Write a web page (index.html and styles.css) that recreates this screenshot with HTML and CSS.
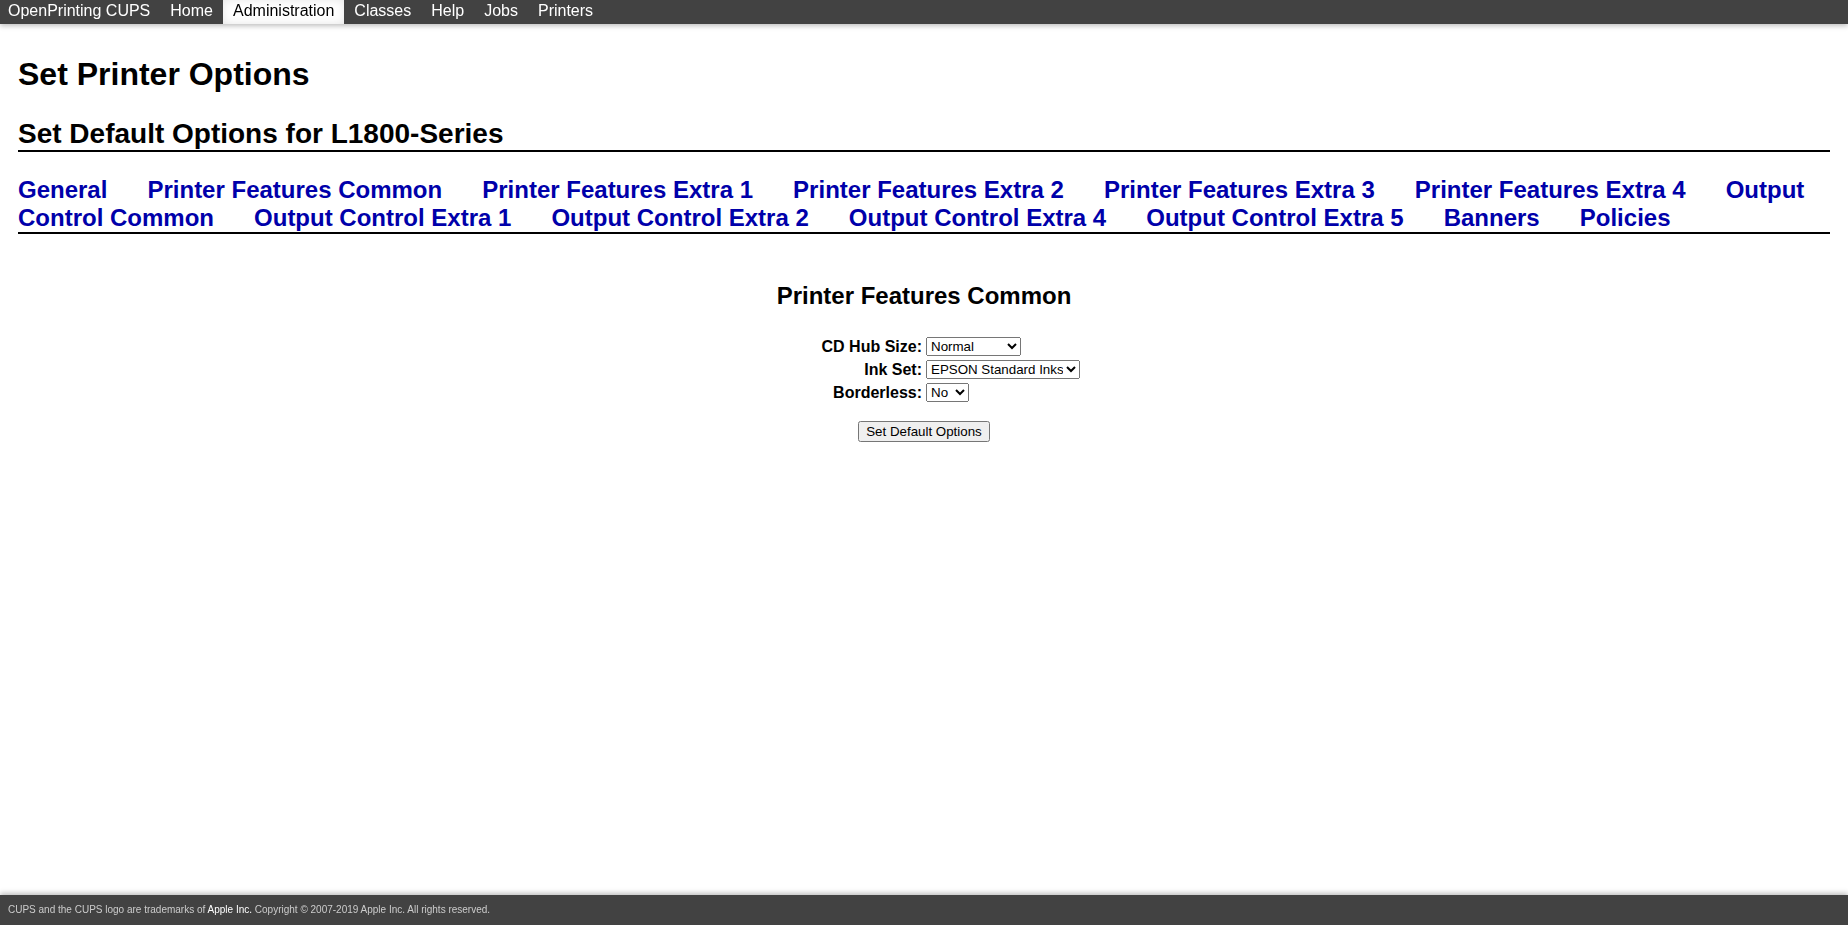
FILE: index.html
```html
<!DOCTYPE html>
<html>
<head>
<meta charset="utf-8">
<title>Set Printer Options - CUPS</title>
<link rel="stylesheet" href="styles.css">
</head>
<body>
<div class="header">
  <ul>
    <li><a class="first" href="#">OpenPrinting CUPS</a></li>
    <li><a href="#">Home</a></li>
    <li><a class="active" href="#">Administration</a></li>
    <li><a href="#">Classes</a></li>
    <li><a href="#">Help</a></li>
    <li><a href="#">Jobs</a></li>
    <li><a href="#">Printers</a></li>
  </ul>
</div>
<div class="body">
  <h1>Set Printer Options</h1>
  <h2 class="title">Set Default Options for L1800-Series</h2>
  <div class="tabs"><a href="#">General</a> <a href="#">Printer Features Common</a> <a href="#">Printer Features Extra 1</a> <a href="#">Printer Features Extra 2</a> <a href="#">Printer Features Extra 3</a> <a href="#">Printer Features Extra 4</a> <a href="#">Output Control Common</a> <a href="#">Output Control Extra 1</a> <a href="#">Output Control Extra 2</a> <a href="#">Output Control Extra 4</a> <a href="#">Output Control Extra 5</a> <a href="#">Banners</a> <a href="#">Policies</a></div>
  <form class="options">
    <h3 class="group">Printer Features Common</h3>
    <table class="opts">
      <tr>
        <th>CD Hub Size:</th>
        <td><select class="sel-hub"><option>Normal</option><option>Small</option></select></td>
      </tr>
      <tr>
        <th>Ink Set:</th>
        <td><select class="sel-ink"><option>EPSON Standard Inks</option></select></td>
      </tr>
      <tr>
        <th>Borderless:</th>
        <td><select class="sel-border"><option>No</option><option>Yes</option></select></td>
      </tr>
    </table>
    <p class="submit"><input type="submit" value="Set Default Options"></p>
  </form>
</div>
<div class="footer">CUPS and the CUPS logo are trademarks of <a href="#">Apple Inc.</a> Copyright &copy; 2007-2019 Apple Inc. All rights reserved.</div>
</body>
</html>
```
FILE: styles.css
```css
html, body {
  margin: 0;
  padding: 0;
  background: #ffffff;
  color: #000000;
  font-family: "Liberation Sans", Arial, Helvetica, sans-serif;
}

.header {
  position: fixed;
  top: 0;
  left: 0;
  right: 0;
  height: 24px;
  background: rgba(46, 46, 46, 0.9);
  box-shadow: 0 2px 5px rgba(0, 0, 0, 0.25);
  z-index: 10;
}

.header ul {
  list-style: none;
  margin: 0;
  padding: 0;
  display: flex;
}

.header a {
  display: block;
  padding: 2px 10px 4px;
  font-size: 16px;
  line-height: 18px;
  color: #ffffff;
  text-decoration: none;
}

.header a.first {
  padding-left: 8px;
}

.header a.active {
  background: #ffffff;
  color: #000000;
  box-shadow: rgba(0, 0, 0, 0.1) 0 0 10px 0 inset;
}

.body {
  padding: 24px 18px 60px;
}

h1 {
  font-size: 32px;
  line-height: 37px;
  font-weight: bold;
  margin: 32px 0 0;
}

h2.title {
  font-size: 28px;
  line-height: 32px;
  font-weight: bold;
  margin: 25px 0 0;
  border-bottom: 2px solid #000000;
}

.tabs {
  margin-top: 24px;
  font-size: 24px;
  line-height: 28px;
  font-weight: bold;
  border-bottom: 2px solid #000000;
}

.tabs a {
  color: #0000aa;
  text-decoration: none;
  margin-right: 33.4px;
}

h3.group {
  text-align: center;
  font-size: 24px;
  line-height: 28px;
  font-weight: bold;
  margin: 48px 0 24px;
}

table.opts {
  width: 100%;
  border-spacing: 2px;
}

table.opts th {
  width: 50%;
  text-align: right;
  font-size: 16px;
  font-weight: bold;
  padding: 1px;
}

table.opts td {
  text-align: left;
  padding: 1px;
}

select {
  font-family: "Liberation Sans", Arial, sans-serif;
  font-size: 13.33px;
}

.sel-hub { width: 95px; }
.sel-ink { width: 154px; }
.sel-border { width: 43px; }

p.submit {
  text-align: center;
  margin: 16px 0;
}

p.submit input {
  font-family: "Liberation Sans", Arial, sans-serif;
  font-size: 13.33px;
}

.footer {
  position: fixed;
  left: 0;
  right: 0;
  bottom: 0;
  height: 30px;
  padding: 0 8px;
  background: rgba(46, 46, 46, 0.9);
  box-shadow: 0 -2px 5px rgba(0, 0, 0, 0.25);
  color: #cccccc;
  font-size: 10px;
  line-height: 30px;
}

.footer a {
  color: #ffffff;
  text-decoration: none;
}
```
